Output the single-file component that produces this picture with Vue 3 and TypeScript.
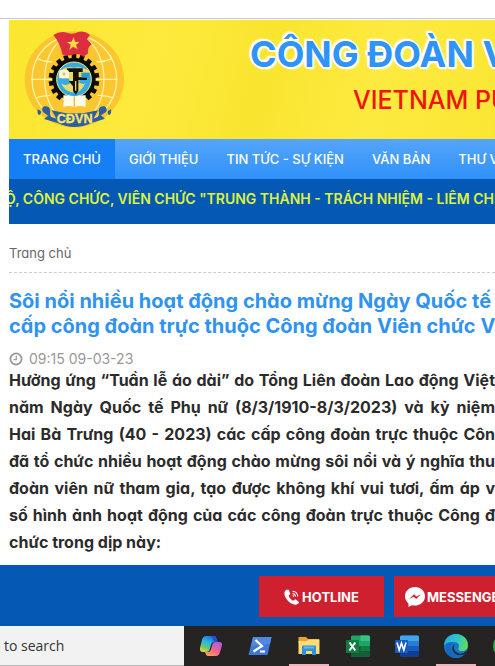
<script setup lang="ts">
interface NavItem {
  label: string
  active?: boolean
}

interface BodyLine {
  text: string
  fill?: boolean
}

const nav: NavItem[] = [
  { label: 'TRANG CHỦ', active: true },
  { label: 'GIỚI THIỆU' },
  { label: 'TIN TỨC - SỰ KIỆN' },
  { label: 'VĂN BẢN' },
  { label: 'THƯ VIỆN' },
]

const headline: string[] = [
  'Sôi nổi nhiều hoạt động chào mừng Ngày Quốc tế',
  'cấp công đoàn trực thuộc Công đoàn Viên chức V',
]

const lines: BodyLine[] = [
  { text: 'Hưởng ứng “Tuần lễ áo dài” do Tổng Liên đoàn Lao động Việt', fill: true },
  { text: 'năm Ngày Quốc tế Phụ nữ (8/3/1910-8/3/2023) và kỷ niệm', fill: true },
  { text: 'Hai Bà Trưng (40 - 2023) các cấp công đoàn trực thuộc Côn', fill: true },
  { text: 'đã tổ chức nhiều hoạt động chào mừng sôi nổi và ý nghĩa thu', fill: true },
  { text: 'đoàn viên nữ tham gia, tạo được không khí vui tươi, ấm áp v', fill: true },
  { text: 'số hình ảnh hoạt động của các công đoàn trực thuộc Công đ', fill: true },
  { text: 'chức trong dịp này:' },
]

const teeth: number[] = Array.from({ length: 18 }, (_, i) => i * 20)
</script>

<template>
  <div class="page">
    <div class="topline"></div>
    <main class="site">
      <header class="banner">
        <svg class="logo" viewBox="0 0 360 348" role="img" aria-label="CĐVN">
          <ellipse cx="178" cy="172" rx="149" ry="144" fill="#fbc62f" />
          <ellipse cx="178" cy="172" rx="127" ry="132" fill="#fbc62f" stroke="#fff3a6" stroke-width="4" />
          <ellipse cx="178" cy="172" rx="89" ry="132" fill="#fbc62f" stroke="#fff3a6" stroke-width="4" />
          <path d="M49 172H307M66 110Q90 121 112 119M244 119Q268 121 290 110M62 228Q86 219 108 220M248 220Q272 219 296 228" fill="none" stroke="#fff3a6" stroke-width="4" />
          <g fill="#0b0b09">
            <rect v-for="a in teeth" :key="a" x="170" y="96" width="14" height="20" :transform="`rotate(${a} 177 172)`" />
            <circle cx="177" cy="172" r="65" />
          </g>
          <circle cx="177" cy="172" r="52" fill="#36aae5" stroke="#f6e97a" stroke-width="3" />
          <path d="M134 146Q155 130 176 137Q202 133 224 147V165H196L192 181Q205 190 211 183Q200 207 186 211L171 211Q145 205 139 184Q152 195 167 182L160 169H132Z" fill="#eadb67" />
          <path d="M156 139H203V150H191V166H216V174H190V183L184 193H174L161 177H174V150H156Z" fill="#12110c" />
          <rect x="133" y="144" width="29" height="25" rx="6" fill="#fff9e2" />
          <circle cx="147" cy="156" r="5" fill="#f2c94c" />
          <rect x="199" y="152" width="25" height="15" fill="#249bd3" />
          <path d="M174 178H190V207L182 218L174 207Z" fill="#12110c" />
          <path d="M182 177V206" stroke="#e4d15f" stroke-width="4" />
          <path d="M145 220Q163 219 178 224Q194 219 212 220V255Q192 249 178 255Q163 249 145 255Z" fill="#fffbe6" />
          <path d="M178 224V254" stroke="#f0b93d" stroke-width="4" />
          <path d="M115 39Q137 24 158 33Q174 39 190 30Q208 25 225 39L216 51L230 67Q215 78 220 93L205 105Q194 93 181 97Q153 104 143 99Q135 62 115 39Z" fill="#dd2e40" />
          <path d="M176 45L180 59L193 60L183 69L188 82L175 74L163 83L167 68L156 60L170 59Z" fill="#ffdd42" />
          <g fill="#2c5f9c">
            <path d="M110 265Q178 284 249 265L240 282L229 303Q178 327 128 303L120 282Z" />
            <path d="M128 303L87 291L99 281L84 270Q77 258 88 253Q104 252 106 266Q102 278 110 285L125 290Z" />
            <path d="M229 303L270 290L258 280L273 270Q279 259 268 253Q252 252 251 266Q255 278 247 285L232 291Z" />
            <path d="M68 262Q84 267 75 278Q66 281 68 262ZM288 262Q273 267 280 278Q290 281 288 262Z" />
          </g>
          <text x="179" y="304" text-anchor="middle" class="logo-text">CĐVN</text>
        </svg>
        <div class="banner-text">
          <h1>CÔNG ĐOÀN VIÊN CHỨC</h1>
          <p>VIETNAM PUBLIC</p>
        </div>
      </header>

      <nav class="menu">
        <a v-for="item in nav" :key="item.label" href="#" :class="{ active: item.active }">{{ item.label }}</a>
      </nav>

      <div class="ticker"><span>Ộ, CÔNG CHỨC, VIÊN CHỨC "TRUNG THÀNH - TRÁCH NHIỆM - LIÊM CHÍNH</span></div>

      <div class="crumbs"><a href="#">Trang chủ</a></div>

      <article>
        <h2><span v-for="h in headline" :key="h">{{ h }}</span></h2>
        <div class="date">
          <svg viewBox="0 0 14 14" aria-hidden="true">
            <circle cx="7" cy="7" r="5.6" fill="none" stroke="currentColor" stroke-width="1.8" />
            <path d="M7.3 3.8V7.7H4.6" fill="none" stroke="currentColor" stroke-width="1.2" />
          </svg>
          <time>09:15 09-03-23</time>
        </div>
        <p class="lead">
          <span v-for="l in lines" :key="l.text" :class="{ fill: l.fill }">{{ l.text }}</span>
        </p>
      </article>
    </main>

    <div class="contact">
      <button type="button">
        <svg class="phone" viewBox="0 0 16 16" aria-hidden="true">
          <path d="M2.5.8C.2 2-.2 5 1.300 8C3 11.700 6.500 14.700 10 15.500C12.400 16 14.500 15 15.200 13.200L11.500 10.200L9 11.700C7 10.700 5.300 8.800 4.600 6.800L6.300 5L4.800.8Z" fill="#fff" />
          <path d="M8.500 4.500Q11.200 4.800 11.500 7.500M8.500 2.200Q13.300 2.500 13.800 7.500M8.700 6.500L9.800 7.600" fill="none" stroke="#fff" stroke-width="1.100" />
        </svg>
        HOTLINE
      </button>
      <button type="button">
        <svg class="messenger" viewBox="0 0 20 20" aria-hidden="true">
          <path d="M10 0C4.300 0 0 4 0 9.300C0 12.300 1.300 14.700 3.500 16.400V20L6.800 18.200C13.500 20 20 15.600 20 9.300C20 4 15.700 0 10 0Z" fill="#fff" />
          <path d="M4.200 12L9 7.300L11.400 9.600L16 7.200L11.200 12.100L8.700 9.700Z" fill="#cf2030" />
        </svg>
        MESSENGER
      </button>
    </div>

    <footer class="taskbar">
      <input type="text" value="to search" aria-label="Search" />
      <div class="apps">
        <button type="button" aria-label="Copilot">
          <svg viewBox="0 0 24 24">
            <defs>
              <linearGradient id="cpA" x1="0.700" y1="0" x2="0.200" y2="1">
                <stop offset="0" stop-color="#1f65df" /><stop offset=".4" stop-color="#29b5e5" /><stop offset=".7" stop-color="#5fc77b" /><stop offset="1" stop-color="#f2d12e" />
              </linearGradient>
              <linearGradient id="cpB" x1="0.800" y1="0" x2="0.200" y2="1">
                <stop offset="0" stop-color="#a85ee8" /><stop offset=".5" stop-color="#ef5f96" /><stop offset="1" stop-color="#ffa052" />
              </linearGradient>
            </defs>
            <path d="M7 2H15Q17 2 18 6L18.500 8H15Q13 8 12.300 10L10.500 16Q10 18 7 18H4Q0 18 1.200 13L3 6Q4 2 7 2Z" fill="url(#cpA)" />
            <path d="M12 2H15Q17 2 18 6L18.500 8H15L13.500 4Q13 2 12 2Z" fill="#2354ce" />
            <path d="M17 22H9Q7 22 6 18H9Q11 18 11.700 16L13.500 10Q14 8 17 8H20Q24 8 22.800 12L21 18Q20 22 17 22Z" fill="url(#cpB)" />
          </svg>
        </button>
        <button type="button" aria-label="PowerShell">
          <svg viewBox="0 0 24 24">
            <path d="M5 3H23.500L19.500 21H.5Z" fill="#3f78d6" />
            <path d="M5 3H23.500L22 10L3 12Z" fill="#5289e0" />
            <path d="M7.500 6L14 12L5.500 17.500M12 17.500H17" fill="none" stroke="#fff" stroke-width="2.200" />
          </svg>
        </button>
        <button type="button" class="running" aria-label="File Explorer">
          <svg viewBox="0 0 24 24">
            <path d="M1.500 3H9L11 5H22V9H1.500Z" fill="#e7a52d" />
            <path d="M1.500 7H10L12 5.500H22.500V20H1.500Z" fill="#ffdc75" />
            <path d="M5 21V12.500Q5 11.500 6 11.500H18Q19 11.500 19 12.500V21H15V17H9V21Z" fill="#2f91d8" />
            <path d="M7 13.500H17" stroke="#64b8ed" stroke-width="2" />
          </svg>
        </button>
        <button type="button" aria-label="Excel">
          <svg viewBox="0 0 24 24">
            <rect x="5" y="1.500" width="19" height="21" rx="1.500" fill="#21a366" />
            <path d="M14.500 1.500H22.500Q24 1.500 24 3V7H14.500Z" fill="#33c481" />
            <path d="M5 12H24V22.500H5Z" fill="#185c37" /><path d="M14.500 12H24V17H14.500Z" fill="#107c41" />
            <rect y="6" width="13" height="13" rx="1" fill="#107c41" />
            <path d="M3.500 8.500L9.300 16.500M9.300 8.500L3.500 16.500" stroke="#fff" stroke-width="2" />
          </svg>
        </button>
        <button type="button" aria-label="Word">
          <svg viewBox="0 0 24 24">
            <rect x="5" y="1.500" width="19" height="21" rx="1.500" fill="#185abd" />
            <path d="M5 7V3Q5 1.500 6.500 1.500H22.500Q24 1.500 24 3V7Z" fill="#41a5ee" />
            <path d="M5 7H24V12H5Z" fill="#2b7cd3" /><path d="M5 17H24V21Q24 22.500 22.500 22.500H6.500Q5 22.500 5 21Z" fill="#103f91" />
            <rect y="6" width="13" height="13" rx="1" fill="#185abd" />
            <path d="M2 8.500L4.200 16L6.500 9L8.800 16L11 8.500" fill="none" stroke="#fff" stroke-width="1.600" />
          </svg>
        </button>
        <button type="button" class="running" aria-label="Edge">
          <svg viewBox="0 0 24 24">
            <defs>
              <linearGradient id="edgeTop" x1="0" y1="0.300" x2="1" y2="0.600">
                <stop offset="0" stop-color="#28a9e8" /><stop offset=".5" stop-color="#2bc7c9" /><stop offset="1" stop-color="#68d957" />
              </linearGradient>
            </defs>
            <circle cx="12" cy="12" r="12" fill="#1474cf" />
            <path d="M0 12C0 5 5 0 12 0C19 0 24 5 24 11C24 15 21 17 18 17C15 17 13.500 15.500 14.500 14C16 11 14 8 10 8C5 7.500 1 9 0 12Z" fill="url(#edgeTop)" />
            <path d="M10 8C7 9 6 12 7 15C9 20 14 22 21 19.500C18 24 11 25.500 6 22C-1 17 1 8 10 8Z" fill="#1769bd" />
            <path d="M11 10C8.500 13 10 18 15 19.500Q19 20.500 23 16.500L22.500 18.500L20.500 20.500C14 22 10 20 8.500 16Q7.500 12 11 10Z" fill="#252423" />
          </svg>
        </button>
        <button type="button" aria-label="Browser">
          <svg viewBox="0 0 24 24">
            <circle cx="12" cy="12" r="12" fill="#31a853" /><circle cx="12" cy="12" r="5" fill="#4285f4" />
          </svg>
        </button>
      </div>
    </footer>
  </div>
</template>

<style>
body {
  background: #fff;
}
</style>

<style scoped>
* {
  box-sizing: border-box;
}
.page {
  display: flex;
  flex-direction: column;
  min-height: 100vh;
  overflow: hidden;
  font-family: Inter, "Liberation Sans", sans-serif;
  font-feature-settings: "cv11" 1;
  color: #2b2b2b;
}
h1, h2, p {
  margin: 0;
}
a {
  color: inherit;
  text-decoration: none;
}
button {
  border: 0;
  padding: 0;
  font: inherit;
}
.topline {
  height: 20px;
  border-bottom: 1px solid #fff;
  background: linear-gradient(#fff 18px, #c9c9c9 18px);
}
.site {
  flex: 1;
  padding-left: 9px;
}
.banner {
  display: flex;
  height: 119px;
  padding: 2px 0 0 6px;
  overflow: hidden;
  background: linear-gradient(105deg, #fbe62f, #fdea3d 30%, #f9e52f 52%, #fdea40 75%, #fae632);
}
.logo {
  flex: none;
  width: 120px;
  height: 116px;
}
.logo-text {
  font: 700 38px "Liberation Sans", sans-serif;
  fill: #f9e66b;
  stroke: #f9e66b;
  stroke-width: 1px;
}
.banner-text {
  flex: none;
  padding: 8px 0 0 115px;
  white-space: nowrap;
}
h1 {
  font-size: 36px;
  line-height: 48px;
  font-weight: 700;
  color: #3093f6;
  text-shadow: 2px 0 #fff, -2px 0 #fff, 0 2px #fff, 0 -2px #fff, 1px 1px #fff, -1px -1px #fff, 1px -1px #fff, -1px 1px #fff, 2px 2px 2px #fff, -2px -2px 2px #fff;
}
.banner-text p {
  padding-left: 103px;
  font-size: 25px;
  line-height: 44px;
  font-weight: 500;
  color: #f0140c;
}
.menu {
  display: flex;
  height: 40px;
  overflow: hidden;
  background: linear-gradient(#55a5f8, #3091fb);
}
.menu a {
  flex: none;
  padding: 0 14px;
  font-size: 13px;
  line-height: 40px;
  font-weight: 500;
  color: #fff;
  white-space: nowrap;
}
.menu .active {
  background: #1580f5;
}
.ticker {
  height: 45px;
  overflow: hidden;
  background: #0559b5;
  font-size: 14px;
  line-height: 40px;
  font-weight: 600;
  color: #dcf23c;
  white-space: nowrap;
}
.ticker span {
  margin-left: -4px;
}
.crumbs {
  height: 49px;
  padding-top: 19px;
  border-bottom: 1px dashed #ccc;
  font-size: 13px;
  line-height: 20px;
  color: #666;
}
h2 {
  padding-top: 16px;
  font-size: 20px;
  line-height: 25px;
  font-weight: 700;
  color: #3093f0;
}
h2 span,
.lead span {
  display: block;
  white-space: nowrap;
}
.date {
  display: flex;
  align-items: center;
  gap: 6px;
  padding-top: 12px;
  font-size: 14px;
  line-height: 16px;
  color: #999;
}
.date svg {
  width: 14px;
  height: 14px;
}
.lead {
  font-size: 16px;
  line-height: 27px;
  font-weight: 700;
}
.lead .fill {
  text-align-last: justify;
}
.contact {
  display: flex;
  gap: 10px;
  height: 61px;
  padding: 11px 0 9px 259px;
  background: #0559b5;
}
.contact button {
  display: flex;
  flex: none;
  align-items: center;
  justify-content: center;
  gap: 2px;
  width: 125px;
  background: #cf2030;
  color: #fff;
  font-size: 13px;
  font-weight: 700;
}
.phone {
  width: 16px;
  height: 16px;
}
.messenger {
  width: 20px;
  height: 20px;
}
.taskbar {
  display: flex;
  height: 40px;
  background: #252423;
}
.taskbar input {
  flex: none;
  width: 184px;
  padding: 0 4px;
  border: 0;
  border-bottom: 1px solid #bbb;
  border-radius: 0;
  background: #f2f2f2;
  color: #333;
  font: 14px "Open Sans", "Noto Sans", sans-serif;
}
.apps {
  display: flex;
  padding-left: 2px;
}
.apps button {
  display: flex;
  flex: none;
  align-items: center;
  justify-content: center;
  width: 49px;
  background: linear-gradient(transparent, transparent) no-repeat center bottom / 40px 2px;
}
.apps .running {
  background-image: linear-gradient(#f3b2ba, #f3b2ba);
}
.apps svg {
  width: 24px;
  height: 24px;
}
</style>
